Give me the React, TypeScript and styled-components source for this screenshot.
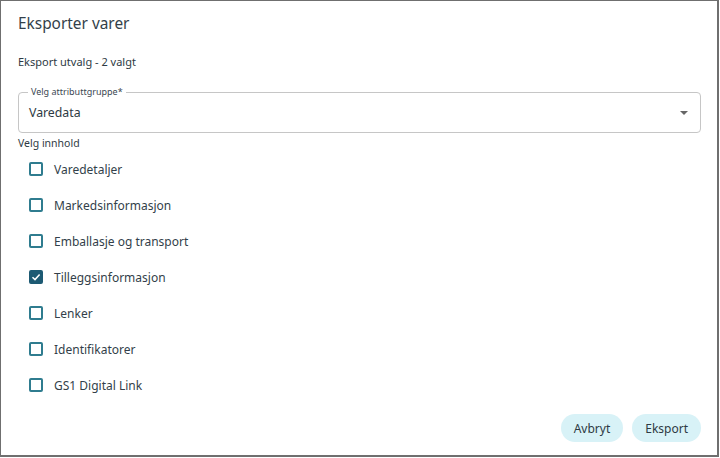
import React, { useState } from "react";
import styled, { createGlobalStyle } from "styled-components";

const Global = createGlobalStyle`
  html, body { margin: 0; padding: 0; background: #ffffff; }
  body { font-family: "Noto Sans", "Open Sans", sans-serif; color: #323f4a; }
  * { box-sizing: border-box; }
`;

const Dialog = styled.div`
  width: 719px;
  height: 457px;
  border: 1px solid #6f6f6f;
  border-right-width: 2px;
  border-bottom-width: 2px;
  background: #fff;
  display: flex;
  flex-direction: column;
  padding: 0 16px 0 17px;
`;

const Title = styled.h2`
  margin: 0;
  padding-top: 12px;
  height: 53px;
  font-size: 15.4px;
  font-weight: 400;
  line-height: 22px;
  color: #333f4a;
`;

const Subtitle = styled.div`
  font-size: 11px;
  line-height: 16px;
  height: 38px;
  color: #2e3a44;
`;

const Field = styled.div`
  position: relative;
  height: 41px;
  border: 1px solid #c6c6c6;
  border-radius: 4px;
  display: flex;
  align-items: center;
  justify-content: space-between;
  padding: 0 12px 0 10px;
`;

const Legend = styled.span`
  position: absolute;
  left: 9px;
  top: -6px;
  font-size: 9px;
  line-height: 10px;
  padding: 0 3px;
  background: #fff;
  color: #3b4752;
`;

const Value = styled.span`
  font-size: 12.3px;
  color: #2e3a44;
`;

const Arrow = styled.span`
  width: 0;
  height: 0;
  border-left: 4.5px solid transparent;
  border-right: 4.5px solid transparent;
  border-top: 4.5px solid #666;
`;

const SectionLabel = styled.div`
  font-size: 10.5px;
  line-height: 16px;
  margin-top: 2px;
  color: #2e3a44;
`;

const List = styled.div`
  display: flex;
  flex-direction: column;
  padding-left: 11px;
`;

const Row = styled.label`
  display: flex;
  align-items: center;
  height: 36px;
  gap: 11px;
  cursor: pointer;
`;

const Box = styled.span<{ $checked: boolean }>`
  width: 14px;
  height: 14px;
  border-radius: 2px;
  border: 2px solid ${(p) => (p.$checked ? "#1d5a73" : "#2f7c8f")};
  background: ${(p) => (p.$checked ? "#1d5a73" : "transparent")};
  display: flex;
  align-items: center;
  justify-content: center;
`;

const Text = styled.span`
  font-size: 12px;
  color: #333f4a;
`;

const Footer = styled.div`
  margin-top: auto;
  display: flex;
  justify-content: flex-end;
  gap: 9px;
  padding-bottom: 13px;
`;

const Button = styled.button`
  height: 28px;
  border: none;
  border-radius: 14px;
  background: #d8f2f7;
  color: #2e3a44;
  font-family: inherit;
  font-size: 12px;
  padding: 0 13px;
  cursor: pointer;
`;

const items = [
  "Varedetaljer",
  "Markedsinformasjon",
  "Emballasje og transport",
  "Tilleggsinformasjon",
  "Lenker",
  "Identifikatorer",
  "GS1 Digital Link",
];

export default function App() {
  const [checked, setChecked] = useState<Record<string, boolean>>({
    Tilleggsinformasjon: true,
  });
  return (
    <>
      <Global />
      <Dialog>
        <Title>Eksporter varer</Title>
        <Subtitle>Eksport utvalg - 2 valgt</Subtitle>
        <Field>
          <Legend>Velg attributtgruppe*</Legend>
          <Value>Varedata</Value>
          <Arrow />
        </Field>
        <SectionLabel>Velg innhold</SectionLabel>
        <List>
          {items.map((it) => (
            <Row
              key={it}
              onClick={() => setChecked((c) => ({ ...c, [it]: !c[it] }))}
            >
              <Box $checked={!!checked[it]}>
                {checked[it] && (
                  <svg width="10" height="10" viewBox="0 0 10 10">
                    <path
                      d="M1.5 5.2 L4 7.6 L8.6 2.6"
                      fill="none"
                      stroke="#fff"
                      strokeWidth="1.5"
                    />
                  </svg>
                )}
              </Box>
              <Text>{it}</Text>
            </Row>
          ))}
        </List>
        <Footer>
          <Button>Avbryt</Button>
          <Button>Eksport</Button>
        </Footer>
      </Dialog>
    </>
  );
}
